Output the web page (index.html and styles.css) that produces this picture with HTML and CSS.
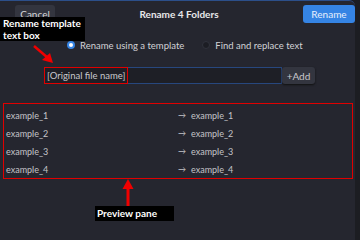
FILE: index.html
```html
<!DOCTYPE html>
<html>
<head>
<meta charset="utf-8">
<link rel="stylesheet" href="styles.css">
</head>
<body>
<div class="window">
  <div class="header">
    <button class="btn cancel">Cancel</button>
    <div class="title">Rename 4 Folders</div>
    <button class="btn rename">Rename</button>
  </div>
  <div class="modes">
    <label class="mode"><span class="radio on"></span>Rename using a template</label>
    <label class="mode"><span class="radio"></span>Find and replace text</label>
  </div>
  <div class="entry-row">
    <div class="entry"><span class="tag">[Original file name]</span></div>
    <button class="btn add">+Add</button>
  </div>
  <div class="preview">
    <div class="row"><span class="old">example_1</span><span class="arr">→</span><span class="new">example_1</span></div>
    <div class="row"><span class="old">example_2</span><span class="arr">→</span><span class="new">example_2</span></div>
    <div class="row"><span class="old">example_3</span><span class="arr">→</span><span class="new">example_3</span></div>
    <div class="row"><span class="old">example_4</span><span class="arr">→</span><span class="new">example_4</span></div>
  </div>
</div>
<div class="note note-top">Rename template<br>text box</div>
<div class="note note-bottom">Preview pane</div>
<svg class="arrows" width="360" height="240" viewBox="0 0 360 240">
  <line x1="34" y1="46" x2="48" y2="58" stroke="#f00000" stroke-width="2.5"/>
  <polygon points="53,63 42,60 50,53" fill="#f00000"/>
  <line x1="128" y1="187" x2="128" y2="206" stroke="#f00000" stroke-width="3"/>
  <polygon points="128,179 122.5,189 133.5,189" fill="#f00000"/>
</svg>
</body>
</html>
```

FILE: styles.css
```css
html, body {
  margin: 0;
  padding: 0;
  background: #1c1d22;
}
body {
  width: 360px;
  height: 240px;
  overflow: hidden;
  position: relative;
  font-family: Lato, "Open Sans", sans-serif;
  font-size: 9px;
  color: #d6d6d8;
}
.window {
  width: 355px;
  height: 240px;
  background: #25262f;
  border-top: 1px solid #2c4f8a;
  box-sizing: border-box;
  border-top-right-radius: 6px;
  display: flex;
  flex-direction: column;
}
.header {
  height: 27px;
  display: flex;
  align-items: flex-start;
  padding: 4px 0 0 15px;
  box-sizing: border-box;
}
.btn {
  font-family: inherit;
  font-size: 10px;
  border: none;
  border-radius: 3px;
  padding: 0;
  color: #d6d6d8;
  background: #33353f;
}
.cancel {
  width: 40px;
  height: 18px;
}
.title {
  flex: 1;
  text-align: center;
  font-weight: bold;
  font-size: 10px;
  color: #e8e8ea;
  line-height: 18px;
  white-space: nowrap;
}
.rename {
  width: 52px;
  height: 18px;
  background: #3584e4;
  color: #e6effc;
}
.modes {
  display: flex;
  align-items: center;
  height: 14px;
  margin-top: 10px;
  padding-left: 67px;
  gap: 18px;
}
.mode {
  display: flex;
  align-items: center;
  gap: 5px;
  font-size: 9.5px;
  color: #d2d2d6;
  white-space: nowrap;
}
.radio {
  width: 8px;
  height: 8px;
  border-radius: 50%;
  background: #1c1d24;
  box-sizing: border-box;
  border: 1px solid #30323c;
}
.radio.on {
  background: #fff;
  border: 2.5px solid #3584e4;
}
.entry-row {
  display: flex;
  margin-top: 15px;
  padding-left: 44px;
  height: 17px;
}
.entry {
  width: 238px;
  box-sizing: border-box;
  border: 1px solid #27477e;
  background: #1e1f26;
  display: flex;
  align-items: center;
}
.tag {
  height: 17px;
  box-sizing: border-box;
  border: 1.5px solid #e00000;
  margin: -1px 0 0 -1px;
  padding: 0 2px;
  display: flex;
  align-items: center;
  font-size: 9.5px;
  color: #c8c8cc;
  width: 84px;
  white-space: nowrap;
}
.add {
  width: 33px;
  height: 17px;
  color: #c8c8cc;
  box-shadow: 0 1px 2px #111;
}
.preview {
  margin: 19px 0 0 3px;
  width: 350px;
  height: 76px;
  box-sizing: border-box;
  border: 1.5px solid #e00000;
  padding: 2px 0 0 2px;
  display: flex;
  flex-direction: column;
}
.row {
  height: 18.4px;
  display: flex;
  align-items: center;
  color: #c4c4c8;
}
.old {
  width: 172px;
}
.arr {
  width: 13px;
  font-size: 8px;
}
.note {
  position: absolute;
  background: #000;
  color: #fff;
  font-weight: bold;
  font-size: 10px;
  line-height: 12px;
  box-sizing: border-box;
  white-space: nowrap;
}
.note-top {
  left: 0;
  top: 17px;
  width: 85px;
  height: 24px;
  padding: 0 0 0 3px;
}
.note-bottom {
  left: 95px;
  top: 206px;
  width: 79px;
  height: 15px;
  padding: 1px 0 0 2px;
}
.arrows {
  position: absolute;
  left: 0;
  top: 0;
}
```
